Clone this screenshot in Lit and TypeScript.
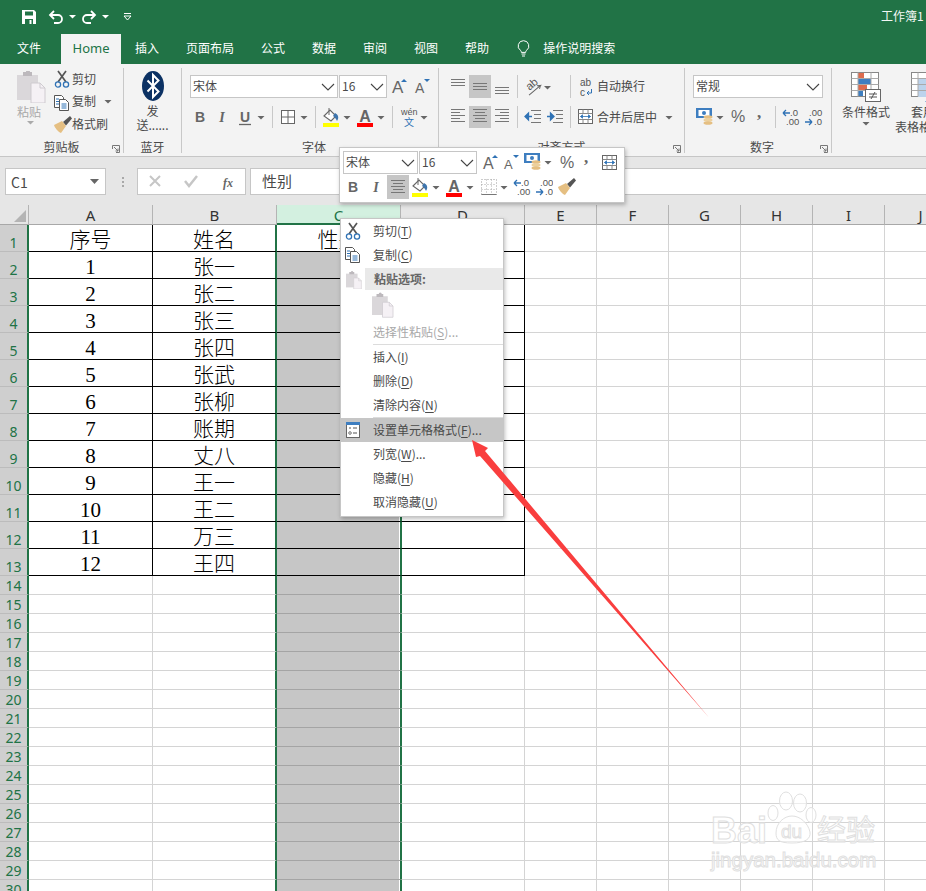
import { LitElement, html, svg, css } from "lit";
import { customElement } from "lit/decorators.js";

const G = "#666";
const BL = "#2f72b5";
const slot = (w: number, h: number, x: number, y: number, body: unknown) =>
  html`<svg class="ic" width="${w}" height="${h}" viewBox="0 0 ${w} ${h}"><g transform="translate(${x} ${y})">${body}</g></svg>`;

const tri = (w: number, cx: number, cy = 11) =>
  html`<svg class="ic" width="${w}" height="22" viewBox="0 0 ${w} 22"><path d="M${cx - 3.5} ${cy - 1}h7l-3.5 3.5z" fill="${G}"/></svg>`;
const sep = (w: number, x: number, h = 22) =>
  html`<svg class="ic" width="${w}" height="${h}" viewBox="0 0 ${w} ${h}"><path d="M${x + 0.5} 0V${h}" stroke="#c8c8c8"/></svg>`;

const clipboard = svg`
  <rect x="0" y="3" width="21" height="25" fill="#dad7da"/>
  <path d="M6 3V1h3a2 2 0 0 1 4 0h2v4H6z" fill="#bdb9bd" transform="translate(0 -1)"/>
  <path d="M14 11h9l5 5v15H14z" fill="#f5f1f5" stroke="#cfcbd0"/>
  <path d="M23 11v5h5" fill="none" stroke="#cfcbd0"/>`;
const scissors = svg`
  <path d="M3 0l8 11M11 0L3 11" stroke="#555" stroke-width="1.7" fill="none"/>
  <circle cx="3" cy="13.5" r="2.6" fill="none" stroke="${BL}" stroke-width="1.3"/>
  <circle cx="11" cy="13.5" r="2.6" fill="none" stroke="${BL}" stroke-width="1.3"/>`;
const copy = svg`
  <path d="M.5.5h7l2 2v10H.5z" fill="#fff" stroke="#555"/>
  <path d="M5.5 4.5h6l3 3v8h-9z" fill="#fff" stroke="#555"/>
  <path d="M2 4h3M2 6.5h3M2 9h3" stroke="${BL}"/><path d="M7.5 9h5M7.5 11h5M7.5 13h5" stroke="${BL}"/>`;
const brush = svg`
  <path d="M9 7l7-6 2 2.500-6 7z" fill="#555"/>
  <path d="M0 10l8-4 4 5-5 7c-3-1-6-5-7-8z" fill="#e5bf82"/>`;
const bucket = svg`
  <path d="M1 9l6-6 6 6-5 5z" fill="#fff" stroke="#666" stroke-width="1.1"/>
  <path d="M6 1v7" stroke="#666"/>
  <path d="M12 6c2 1 4 3 3 6l-1 2c-1-2-2-4-4-5z" fill="#3e75ad"/>
  <rect x="0" y="16" width="16" height="4" fill="#ffff00"/>`;
const fontColor = svg`
  <text x="8" y="15" text-anchor="middle" font-size="16" font-weight="700" fill="#666" font-family="Liberation Sans">A</text>
  <rect x="0" y="16" width="16" height="4" fill="#ff0000"/>`;
const grow = (up: boolean, size: number) => svg`
  <text x="0" y="18" font-size="${size}" fill="#666" font-family="Liberation Sans">A</text>
  <path d="${up ? "M9 7l3-3 3 3z" : "M9 4h6l-3 3z"}" fill="${BL}"/>`;
const money = svg`
  <rect x="0" y="1" width="16" height="10" fill="#3e7ec0"/>
  <rect x="2.500" y="3" width="11" height="6" fill="#fff"/>
  <circle cx="8" cy="6" r="2" fill="#3e7ec0"/>
  <ellipse cx="12" cy="10" rx="4.500" ry="1.800" fill="#e5bf82"/>
  <ellipse cx="12" cy="13" rx="4.500" ry="1.800" fill="#ecd09d"/>
  <ellipse cx="12" cy="16" rx="4.500" ry="1.800" fill="#e5bf82"/>`;
const merge = svg`
  <rect x=".5" y=".5" width="14" height="14" fill="#fff" stroke="#666"/>
  <path d="M.5 4.500h14M.5 10.500h14M5 .5v4M10 .5v4M5 10.500v4M10 10.500v4" stroke="#888" fill="none"/>
  <path d="M2.500 7.500h10M2.500 7.500l2-1.700v3.400zM12.500 7.500l-2-1.700v3.400z" stroke="${BL}" fill="${BL}" stroke-width=".8"/>`;
const decL = svg`
  <text x="7" y="8" font-size="9.500" fill="#555" font-family="Liberation Sans">.0</text>
  <text x="3" y="17" font-size="9.500" fill="#555" font-family="Liberation Sans">.00</text>
  <path d="M0 5h7M0 5l3-3M0 5l3 3" stroke="${BL}" stroke-width="1.300" fill="none"/>`;
const decR = svg`
  <text x="4" y="8" font-size="9.500" fill="#555" font-family="Liberation Sans">.00</text>
  <text x="9" y="17" font-size="9.500" fill="#555" font-family="Liberation Sans">.0</text>
  <path d="M0 14h7M7 14l-3-3M7 14l-3 3" stroke="${BL}" stroke-width="1.300" fill="none"/>`;
const lines = (ws: [number, number][], y0 = 0, step = 3) => svg`${ws.map(
  ([x, w], i) => svg`<path d="M${x} ${y0 + i * step + 0.5}h${w}" stroke="#777"/>`
)}`;
const borders = svg`<rect x=".5" y=".5" width="13" height="13" fill="#fff" stroke="#666"/><path d="M7 .5v13M.5 7h13" stroke="#666"/>`;
const dotted = svg`<rect x=".5" y=".5" width="15" height="15" fill="none" stroke="#999" stroke-dasharray="1 2"/><path d="M5.500 .5v15M10.500 .5v15M.5 5.500h15M.5 10.500h15" stroke="#aaa" stroke-dasharray="1 2"/><path d="M.5 15.500h15" stroke="#777"/>`;
const chevron = html`<svg class="chev" width="14" height="8" viewBox="0 0 14 8"><path d="M1 1l6 6 6-6" fill="none" stroke="#444" stroke-width="1.100"/></svg>`;
const launcher = html`<svg class="launch" width="8" height="8" viewBox="0 0 8 8"><path d="M.5 4V.5H7.500V7.500H4M2 2l4 4M6 3.500V6H3.500" fill="none" stroke="#777"/></svg>`;
const combo = (t: string, cls: string) => html`<div class="combo ${cls}"><span>${t}</span>${chevron}</div>`;
const txt = (t: string, size = 14, weight = 700, style = "normal", fam = "Liberation Sans", extra: unknown = "") => svg`<text x="0" y="15" text-anchor="middle" font-size="${size}" font-weight="${weight}" font-style="${style}" fill="#666" font-family="${fam}">${t}</text>${extra}`;
const under = svg`<path d="M-6 17.500h12" stroke="#666" stroke-width="1.300"/>`;
const wen = svg`<text x="0" y="8" font-size="9" fill="#555" font-family="Liberation Sans">wén</text><text x="3" y="19" font-size="10" fill="${BL}" font-family="Noto Sans CJK SC">文</text>`;
const orient = svg`<g transform="rotate(-40 8 9)"><text x="2" y="9" font-size="11" fill="#555" font-family="Liberation Sans">ab</text><path d="M-1 12h15l-3-2M14 12l-3 2" stroke="#666" fill="none"/></g>`;
const wrapIc = svg`<text x="0" y="8" font-size="10" fill="#555" font-family="Liberation Sans">ab</text><text x="0" y="18" font-size="10" fill="#555" font-family="Liberation Sans">c</text><path d="M7 15h4.500v-4M7 15l2-2M7 15l2 2" stroke="${BL}" fill="none"/>`;
const indentL = svg`<path d="M6 1.500h10M9 5.500h7M9 9.500h7M6 13.500h10" stroke="#777"/><path d="M0 7.500h7M0 7.500l3.500-3.500v7z" stroke="${BL}" fill="${BL}" stroke-width="1.300"/>`;
const indentR = svg`<path d="M6 1.500h10M9 5.500h7M9 9.500h7M6 13.500h10" stroke="#777"/><path d="M0 7.500h7M7 7.500L3.500 4v7z" stroke="${BL}" fill="${BL}" stroke-width="1.300"/>`;
const gridIcon = (inner: unknown) => svg`
  <rect x=".5" y=".5" width="27" height="24" fill="#fff" stroke="#888"/>
  ${inner}
  <path d="M7 .5v24M20 .5v24M.5 6.500h27M.5 12.500h27M.5 18.500h27" stroke="#aaa"/>`;
const cond = svg`
  ${gridIcon(svg`<rect x="7" y="1" width="6" height="5" fill="#dd6b4d"/><rect x="7" y="7" width="13" height="5" fill="#3e7ec0"/><rect x="7" y="13" width="9" height="5" fill="#dd6b4d"/><rect x="7" y="19" width="5" height="5" fill="#3e7ec0"/>`)}
  <rect x="14.500" y="17.500" width="15" height="12" fill="#fff" stroke="#666"/>
  <path d="M18 22h8M18 25h8M24 20l-4 7" stroke="#555" fill="none"/>`;
const tableFmt = svg`
  ${gridIcon(svg`<rect x="7" y="7" width="21" height="18" fill="#bcd3ec"/>`)}
  <path d="M14 30l14-13v13z" fill="#3e7ec0"/>`;
const formatIc = svg`
  <rect x=".5" y=".5" width="13" height="15" fill="#fff" stroke="#666"/>
  <rect x="0" y="0" width="14" height="3" fill="#3e7ec0"/>
  <path d="M3 6h2M7 6h4M7 11h4" stroke="#555"/><circle cx="4" cy="11" r="1.300" fill="none" stroke="#555" stroke-width=".8"/>`;

const COLS = ["A", "B", "C", "D", "E", "F", "G", "H", "I", "J"];
const NAMES = ["姓名", "张一", "张二", "张三", "张四", "张武", "张柳", "账期", "丈八", "王一", "王二", "万三", "王四"];

@customElement("app-root")
export class AppRoot extends LitElement {
  static styles = css`
    :host { display: block; width: 926px; height: 891px; overflow: hidden; position: relative; background: #fff;
      font-family: "Noto Sans CJK SC", "Noto Sans", sans-serif; font-size: 12px; color: #4a4a4a; }
    .ic { display: block; flex: none; }
    .titlebar { height: 34px; background: #217346; display: flex; align-items: center; color: #fff; }
    .qat { display: flex; align-items: center; padding-left: 19px; flex: 1; }
    .qgap { width: 4px; flex: none; }
    .book { font-size: 12px; width: 45px; white-space: nowrap; opacity: .95; padding-bottom: 3px; }
    .tabs { height: 30px; background: #217346; color: #fff; display: flex; align-items: center; gap: 27px; padding-left: 17px; }
    .tab { white-space: nowrap; margin-bottom: 3px; }
    .tab.file { margin-right: -7px; }
    .tab.home { width: 60px; height: 30px; box-sizing: border-box; padding-bottom: 3px; margin-bottom: 0; background: #f3f3f3; color: #217346; font: 13px "Noto Sans", sans-serif;
      display: flex; align-items: center; justify-content: center; margin-right: -13px; }
    .tab.help { margin-right: 2px; }
    .search { margin-left: -1px; margin-bottom: 3px; display: flex; align-items: center; gap: 13px; }
    .ribbon { height: 93px; box-sizing: border-box; background: #f3f3f3; border-bottom: 1px solid #c6c6c6; padding: 4px 0; display: flex; }
    .group { height: 85px; box-sizing: border-box; border-right: 1px solid #c8c8c8; display: flex; flex-direction: column; flex: none; }
    .label { margin-top: auto; height: 16px; line-height: 16px; margin-bottom: -2px; text-align: center; position: relative; white-space: nowrap; }
    .launch { position: absolute; right: 3px; top: 6px; }
    .g-clip { width: 124px; }
    .clipbody { display: flex; }
    .paste { width: 37px; padding: 3px 0 0 17px; color: #a9a9a9; flex: none; }
    .paste .t { margin-top: 2px; line-height: 14px; }
    .tools { display: flex; flex-direction: column; }
    .tool { height: 22.500px; display: flex; align-items: center; white-space: nowrap; }
    .tool span { padding-bottom: 2px; }
    .g-bt { width: 58px; align-items: center; }
    .g-bt .oval { margin-top: 3px; }
    .g-bt .t { line-height: 14px; text-align: center; white-space: nowrap; margin-top: 3px; }
    .g-bt .t + .t { margin-top: 0; }
    .g-bt .label { width: 100%; }
    .g-font { width: 257px; padding: 7px 0 0 8px; }
    .g-align { width: 246px; padding-top: 7px; }
    .g-num { width: 147px; padding: 7px 0 0 8px; }
    .g-style { border-right: none; display: flex; flex-direction: row; width: 120px; }
    .row1 { display: flex; height: 23px; }
    .row2 { display: flex; height: 22px; margin-top: 8px; align-items: center; }
    .combo { box-sizing: border-box; height: 23px; background: #fff; border: 1px solid #c6c6c6; display: flex; align-items: center;
      justify-content: space-between; padding: 0 2px 0 2px; flex: none; }
    .combo span { padding-bottom: 2px; }
    .combo + .combo { margin-left: 1px; }
    .c148 { width: 148px; } .c48 { width: 48px; } .c130 { width: 130px; } .c75 { width: 75px; } .c58 { width: 58px; }
    .on { background: #c6c6c6; }
    .lab { white-space: nowrap; margin-left: 3px; padding-bottom: 2px; align-self: center; }
    .stylebtn { display: flex; flex-direction: column; align-items: center; text-align: center; padding-top: 4px; flex: none; white-space: nowrap; }
    .stylebtn .t { line-height: 15px; }
    .stylebtn svg:first-child { margin-bottom: 1px; }
    .sb1 { width: 68px; }
    .sb2 { width: 48px; margin-left: -5px; align-items: flex-start; }
    .sb2 svg:first-child, .sb2 .tao { margin-left: 16px; }
    .fbar { height: 48px; box-sizing: border-box; background: #e6e6e6; padding: 11px 0 0 5px; display: flex; }
    .box { height: 27px; box-sizing: border-box; background: #fff; border: 1px solid #c6c6c6; display: flex; align-items: center; flex: none; }
    .name { width: 101px; padding: 0 5px; justify-content: space-between; font-size: 14px; }
    .grip { width: 31px; flex: none; }
    .fx { width: 109px; }
    .input { width: 700px; margin-left: 4px; padding-left: 11px; padding-bottom: 2px; font-size: 15px; }
    .sheet { display: grid; grid-template-columns: 29px repeat(4, 124px) repeat(6, 72px);
      grid-template-rows: 20px repeat(13, 27px) repeat(17, 19px); }
    .cell { box-sizing: border-box; border-right: 1px solid #d4d4d4; border-bottom: 1px solid #d4d4d4; background: #fff;
      display: flex; align-items: flex-end; justify-content: center; color: #000; overflow: hidden; white-space: nowrap;
      font: 300 21px/22px "Liberation Serif", "Noto Sans CJK SC", serif; }
    .cell.tb { border-bottom-color: #000; border-right-color: #000; }
    .cell.b { border-right: 2px solid #217346; }
    .cell.c { background: #c6c6c6; border-right: 1px solid #217346; box-shadow: inset -1px 0 #fff; }
    .cell.c.plain { border-bottom-color: #a4a4a4; }
    .cell.c.first { background: #fff; box-shadow: none; }
    .cell.d { border-left: 1px solid #217346; }
    .cell.tb.d { border-right-color: #000; }
    .corner { background: #e6e6e6; border-right: 1px solid #b4b4b4; border-bottom: 1px solid #a8a8a8; box-sizing: border-box; }
    .colh { background: #e6e6e6; box-sizing: border-box; border-right: 1px solid #b4b4b4; border-bottom: 1px solid #a8a8a8;
      text-align: center; font: 15px/21px "Noto Sans", sans-serif; color: #333; overflow: hidden; }
    .colh.sel { background: #d3f0e0; color: #217346; border-bottom: 2px solid #217346; }
    .rowh { background: #cfcfcf; box-sizing: border-box; border-right: 2px solid #217346; border-bottom: 1px solid #bcbcbc;
      color: #217346; font: 14px/17px "Noto Sans", sans-serif; display: flex; align-items: flex-end; justify-content: center; overflow: hidden; }
    .mini { position: absolute; left: 339px; top: 147px; width: 286px; height: 56px; box-sizing: border-box; background: #fff;
      border: 1px solid #c6c6c6; box-shadow: 1px 2px 4px rgba(0,0,0,.25); padding: 3px 0 0 3px; }
    .mini .row2 { margin-top: 1px; height: 24px; }
    .mini .on { height: 24px; }
    .menu { position: absolute; left: 340px; top: 218px; width: 164px; height: 299px; box-sizing: border-box; background: #fff;
      border: 1px solid #c6c6c6; box-shadow: 1px 2px 4px rgba(0,0,0,.25); display: flex; flex-direction: column; }
    .item { height: 24px; display: flex; align-items: center; flex: none; white-space: nowrap; }
    .item > span:last-child { padding-bottom: 1px; }
    .item .ico { width: 32px; flex: none; display: flex; justify-content: flex-start; }
    .item.dis { color: #a8a8a8; }
    .item.hi { background: #c6c6c6; }
    .item u { text-decoration-thickness: 1px; text-underline-offset: 2px; }
    .phead { height: 22px; flex: none; display: flex; align-items: center; margin-top: 1px; }
    .phead .ico { width: 24px; flex: none; display: flex; justify-content: center; }
    .phead .bar { flex: 1; align-self: stretch; background: #e9e9e9; display: flex; align-items: center; padding: 0 0 2px 9px; font-weight: 700; color: #666; }
    .pbig { height: 30px; flex: none; padding: 0 0 0 30px; }
    .msep { height: 1px; background: #dcdcdc; margin-left: 32px; flex: none; }
    .over { position: absolute; left: 0; top: 0; pointer-events: none; }
  `;

  private sheet() {
    const cells: unknown[] = [html`<div class="corner"><svg class="ic" width="28" height="19" viewBox="0 0 28 19"><path d="M26 5v12H14z" fill="#b4b4b4"/></svg></div>`];
    COLS.forEach((c, i) => cells.push(html`<div class="colh ${i === 2 ? "sel" : ""}">${c}</div>`));
    for (let r = 1; r <= 30; r++) {
      cells.push(html`<div class="rowh">${r}</div>`);
      const tb = r <= 13;
      COLS.forEach((_, i) => {
        let text = "";
        if (r <= 13 && i === 0) text = r === 1 ? "序号" : String(r - 1);
        if (r <= 13 && i === 1) text = NAMES[r - 1];
        if (r === 1 && i === 2) text = "性别";
        const cls = ["cell"];
        if (tb && i < 4) cls.push("tb");
        if (i === 1) cls.push("b");
        if (i === 2) { cls.push("c"); if (!tb) cls.push("plain"); if (r === 1) cls.push("first"); }
        if (i === 3) cls.push("d");
        cells.push(html`<div class="${cls.join(" ")}">${text}</div>`);
      });
    }
    return html`<div class="sheet">${cells}</div>`;
  }

  private menuItem(t: string, k: string, rest = "", ico: unknown = "", cls = "") {
    return html`<div class="item ${cls}"><span class="ico">${ico}</span><span>${t}(<u>${k}</u>)${rest}</span></div>`;
  }

  render() {
    return html`
      <div class="titlebar">
        <div class="qat">
          ${slot(21, 20, 3, 3, svg`<path d="M0 0h12l2 2v12H0z" fill="#fff"/><rect x="3" y="1.500" width="8" height="4" fill="#217346"/><rect x="3" y="9" width="8" height="5" fill="#217346"/><rect x="7.500" y="10" width="2" height="4" fill="#fff"/>`)}
          <span class="qgap"></span>
          ${slot(22, 20, 5, 3, svg`<path d="M2 5h7a4 4 0 0 1 0 8H5" fill="none" stroke="#fff" stroke-width="1.800"/><path d="M5 1L1 5l4 4" fill="none" stroke="#fff" stroke-width="1.800"/>`)}
          ${slot(13, 20, 3, 8, svg`<path d="M0 0h7l-3.500 3.500z" fill="#fff"/>`)}
          ${slot(22, 20, 3, 3, svg`<path d="M12 5H5a4 4 0 0 0 0 8h4" fill="none" stroke="#fff" stroke-width="1.800"/><path d="M9 1l4 4-4 4" fill="none" stroke="#fff" stroke-width="1.800"/>`)}
          ${slot(13, 20, 1, 8, svg`<path d="M0 0h7l-3.500 3.500z" fill="#fff"/>`)}
          ${slot(20, 20, 10, 6, svg`<path d="M0 .5h7" stroke="#fff"/><path d="M0 3l3.500 4L7 3z" fill="none" stroke="#fff"/>`)}
        </div>
        <div class="book">工作簿1</div>
      </div>
      <div class="tabs">
        <div class="tab file">文件</div>
        <div class="tab home">Home</div>
        ${["插入", "页面布局", "公式", "数据", "审阅", "视图"].map((t) => html`<div class="tab">${t}</div>`)}
        <div class="tab help">帮助</div>
        <div class="search">
          ${slot(13, 18, 0, 1, svg`<path d="M6.500.7a5.300 5.300 0 0 0-3 9.700c.6.500.8 1.300.8 2h4.400c0-.7.2-1.500.8-2a5.300 5.300 0 0 0-3-9.700z" fill="none" stroke="#fff"/><path d="M4.500 14h4M5 16h3" stroke="#fff"/>`)}
          <span>操作说明搜索</span>
        </div>
      </div>

      <div class="ribbon">
        <div class="group g-clip">
          <div class="clipbody">
            <div class="paste">
              ${slot(29, 32, 0, 1, clipboard)}
              <div class="t">粘贴</div>
              <svg class="ic" width="26" height="8" viewBox="0 0 26 8"><path d="M10 2h7l-3.500 3.500z" fill="#aaa"/></svg>
            </div>
            <div class="tools">
              <div class="tool">${slot(18, 18, 1, 1, scissors)}<span>剪切</span></div>
              <div class="tool">${slot(18, 18, 0, 2, copy)}<span>复制</span>${tri(20, 12, 10)}</div>
              <div class="tool">${slot(18, 18, 0, 0, brush)}<span>格式刷</span></div>
            </div>
          </div>
          <div class="label">剪贴板${launcher}</div>
        </div>
        <div class="group g-bt">
          <svg class="ic oval" width="22" height="30" viewBox="0 0 22 30"><ellipse cx="11" cy="15" rx="11" ry="15" fill="#0b3163"/><path d="M5.500 9.500l11 11L11 26V4l5.500 5.500-11 11" fill="none" stroke="#fff" stroke-width="2"/></svg>
          <div class="t">发</div>
          <div class="t">送......</div>
          <div class="label">蓝牙</div>
        </div>
        <div class="group g-font">
          <div class="row1">
            ${combo("宋体", "c148")}${combo("16", "c48")}
            ${slot(27, 23, 5, 0, grow(true, 17))}${slot(20, 23, 1, 0, grow(false, 14))}
          </div>
          <div class="row2">
            ${slot(21, 22, 10, 1, txt("B"))}${slot(22, 22, 11, 1, txt("I", 14, 700, "italic", "Liberation Serif"))}${slot(23, 22, 12, 1, txt("U", 14, 700, "normal", "Liberation Sans", under))}${tri(12, 5)}${sep(8, 4)}
            ${slot(23, 22, 5, 4, borders)}${tri(10, 5)}${sep(10, 6)}
            ${slot(23, 22, 4, 1, bucket)}${tri(10, 5)}
            ${slot(24, 22, 5, 1, fontColor)}${tri(10, 5)}${sep(10, 6)}
            ${slot(23, 22, 5, 1, wen)}${tri(10, 5)}
          </div>
          <div class="label">字体</div>
        </div>
        <div class="group g-align">
          <div class="row1">
            ${slot(30, 23, 12, 4, lines([[0, 14], [0, 14], [0, 14]]))}
            <div class="on">${slot(22, 23, 4, 8, lines([[0, 14], [0, 14], [0, 14]]))}</div>
            ${slot(22, 23, 4, 12, lines([[0, 14], [0, 14], [0, 14]]))}
            ${sep(8, 4, 23)}
            ${slot(22, 23, 5, 3, orient)}
            ${slot(9, 23, 0, 0, svg`<path d="M1 11h7l-3.500 3.500z" fill="${G}"/>`)}
            ${sep(26, 18, 23)}
            ${slot(16, 23, 2, 3, wrapIc)}
            <span class="lab">自动换行</span>
          </div>
          <div class="row2">
            ${slot(30, 22, 12, 3, lines([[0, 14], [0, 9], [0, 14], [0, 9], [0, 14]], 0, 3))}
            <div class="on">${slot(22, 22, 4, 3, lines([[0, 14], [2, 10], [0, 14], [2, 10], [0, 14]], 0, 3))}</div>
            ${slot(22, 22, 4, 3, lines([[0, 14], [5, 9], [0, 14], [5, 9], [0, 14]], 0, 3))}
            ${sep(8, 4)}
            ${slot(22, 22, 4, 3, indentL)}${slot(24, 22, 4, 3, indentR)}
            ${sep(8, 3)}
            ${slot(19, 22, 3, 3, merge)}
            <span class="lab">合并后居中</span>
            ${tri(18, 12)}
          </div>
          <div class="label">对齐方式${launcher}</div>
        </div>
        <div class="group g-num">
          <div class="row1">${combo("常规", "c130")}</div>
          <div class="row2">
            ${slot(21, 22, 3, 1, money)}${tri(12, 6)}
            ${slot(24, 22, 12, 1, txt("%", 16, 400))}
            ${slot(18, 22, 9, -3, txt(",", 17, 700, "normal", "Liberation Serif"))}
            ${sep(13, 7)}
            ${slot(20, 22, 2, 2, decL)}${slot(22, 22, 4, 2, decR)}
          </div>
          <div class="label">数字${launcher}</div>
        </div>
        <div class="group g-style">
          <div class="stylebtn sb1">
            ${slot(30, 31, 0, 0, cond)}
            <div class="t">条件格式</div>
            <svg class="ic" width="10" height="8" viewBox="0 0 10 8"><path d="M1.500 3h7L5 6.500z" fill="${G}"/></svg>
          </div>
          <div class="stylebtn sb2">
            ${slot(36, 31, 0, 0, tableFmt)}
            <div class="t tao">套用</div>
            <div class="t">表格格式</div>
          </div>
        </div>
      </div>

      <div class="fbar">
        <div class="box name"><span>C1</span><svg width="10" height="6" viewBox="0 0 10 6"><path d="M0 0h9L4.500 5z" fill="${G}"/></svg></div>
        <div class="grip">${slot(31, 27, 16, 9, svg`<g fill="#a8a8a8"><rect width="2" height="2"/><rect y="4" width="2" height="2"/><rect y="8" width="2" height="2"/></g>`)}</div>
        <div class="box fx">
          ${slot(107, 25, 12, 7, svg`
            <path d="M0 0l10 10M10 0L0 10" stroke="#c6c6c6" stroke-width="2"/>
            <path d="M35 5l4 5 8-10" stroke="#c6c6c6" stroke-width="2.500" fill="none"/>
            <text x="73" y="11" font-size="12" font-style="italic" font-weight="700" fill="#666" font-family="Liberation Serif">fx</text>`)}
        </div>
        <div class="box input">性别</div>
      </div>

      ${this.sheet()}

      <div class="mini">
        <div class="row1">
          ${combo("宋体", "c75")}${combo("16", "c58")}
          ${slot(24, 23, 6, 0, grow(true, 16))}${slot(19, 23, 3, 0, grow(false, 13))}
          ${slot(23, 23, 4, 1, money)}${tri(10, 5)}
          ${slot(26, 23, 14, 2, txt("%", 16, 400))}${slot(15, 23, 7, -3, txt(",", 17, 700, "normal", "Liberation Serif"))}
          ${slot(28, 23, 8, 4, merge)}
        </div>
        <div class="row2">
          ${slot(22, 22, 10, 1, txt("B"))}${slot(22, 22, 11, 1, txt("I", 14, 700, "italic", "Liberation Serif"))}
          <div class="on">${slot(22, 24, 4, 5, lines([[0, 14], [2, 10], [0, 14], [2, 10], [0, 14]], 0, 3))}</div>
          ${slot(22, 22, 3, 1, bucket)}${tri(10, 5)}
          ${slot(24, 22, 5, 1, fontColor)}${tri(10, 5)}
          ${slot(24, 22, 6, 3, dotted)}${tri(10, 5)}
          ${slot(23, 22, 5, 2, decL)}${slot(21, 22, 4, 2, decR)}
          ${slot(25, 22, 5, 1, brush)}
        </div>
      </div>

      <div class="menu">
        ${this.menuItem("剪切", "T", "", slot(22, 18, 5, 1, scissors))}
        ${this.menuItem("复制", "C", "", slot(22, 18, 4, 1, copy))}
        <div class="phead">
          <span class="ico">${slot(18, 20, 2, 3, svg`<g transform="scale(.55)">${clipboard}</g>`)}</span>
          <div class="bar">粘贴选项:</div>
        </div>
        <div class="pbig">${slot(24, 30, 1, 4, svg`<g transform="scale(.75)">${clipboard}</g>`)}</div>
        ${this.menuItem("选择性粘贴", "S", "...", "", "dis")}
        <div class="msep"></div>
        ${this.menuItem("插入", "I")}
        ${this.menuItem("删除", "D")}
        ${this.menuItem("清除内容", "N")}
        <div class="msep"></div>
        ${this.menuItem("设置单元格格式", "F", "...", slot(22, 18, 5, 1, formatIc), "hi")}
        ${this.menuItem("列宽", "W", "...")}
        ${this.menuItem("隐藏", "H")}
        ${this.menuItem("取消隐藏", "U")}
      </div>

      <svg class="over" width="926" height="891" viewBox="0 0 926 891">
        <polygon points="472,440 488,448 485,451 708.500,717 480,456 476,457" fill="#f93e3e"/>
        <g fill="rgba(255,255,255,.55)" stroke="#e0e0e0" stroke-width="1">
          <ellipse cx="786" cy="801" rx="6.500" ry="9"/>
          <ellipse cx="800" cy="803" rx="6.500" ry="9"/>
          <ellipse cx="773" cy="813" rx="5" ry="7.500"/>
          <ellipse cx="811" cy="815" rx="5" ry="7.500"/>
          <path d="M776 833c0-10 8-17 16-17s16 7 18 16c1 7-5 11-18 11s-16-3-16-10z"/>
          <text x="711" y="843" font-size="36" font-weight="700" font-family="Liberation Sans">Bai</text>
          <text x="781" y="838" font-size="19" font-family="Liberation Sans">du</text>
          <text x="817" y="841" font-size="29" font-family="Noto Sans CJK SC">经验</text>
          <text x="711" y="867" font-size="20.500" font-family="Liberation Sans">jingyan.baidu.com</text>
        </g>
      </svg>
    `;
  }
}
